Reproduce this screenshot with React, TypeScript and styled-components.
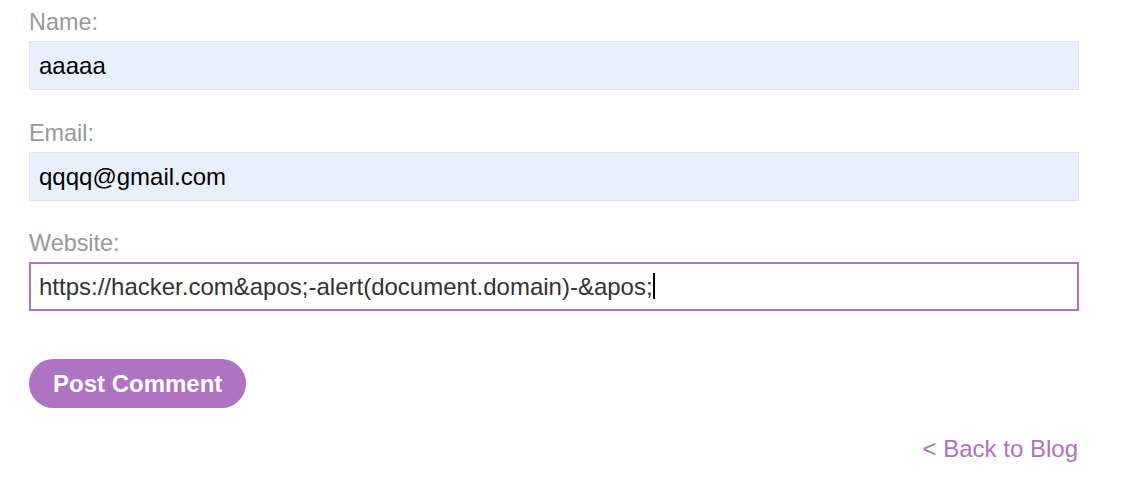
import React from 'react';
import styled, { createGlobalStyle } from 'styled-components';

const purple = '#ae73c1';

const GlobalStyle = createGlobalStyle`
  body {
    margin: 0;
    background: #ffffff;
    font-family: "Liberation Sans", Arial, sans-serif;
  }
`;

const StyledForm = styled.form`
  width: 1050px;
  margin-left: 29px;
  padding-top: 9px;
  display: flex;
  flex-direction: column;
`;

const StyledLabel = styled.label`
  display: block;
  font-size: 23.4px;
  line-height: 26px;
  color: #999999;
  margin-bottom: 6px;
`;

const StyledField = styled.div<{ gap?: number }>`
  position: relative;
  margin-bottom: ${({ gap }) => gap ?? 30}px;
`;

const StyledInput = styled.input<{ focused?: boolean }>`
  box-sizing: border-box;
  display: block;
  width: 100%;
  height: 49px;
  margin: 0;
  font-family: "Liberation Sans", Arial, sans-serif;
  font-size: 24px;
  outline: none;
  border: ${({ focused }) => (focused ? `2px solid ${purple}` : '1px solid #e3e5e8')};
  padding: 0 ${({ focused }) => (focused ? '8px' : '9px')};
  background: ${({ focused }) => (focused ? '#ffffff' : '#e8f0fe')};
  color: ${({ focused }) => (focused ? '#333333' : '#000000')};
`;

// text cursor drawn after the last character of the focused field
const StyledCaret = styled.span`
  position: absolute;
  left: 624px;
  top: 11px;
  width: 1.5px;
  height: 26px;
  background: #000000;
`;

const StyledButton = styled.button`
  align-self: flex-start;
  margin-top: 18px;
  height: 49px;
  padding: 0 24px;
  border: none;
  border-radius: 25px;
  background: ${purple};
  color: #ffffff;
  font-family: "Liberation Sans", Arial, sans-serif;
  font-size: 24px;
  font-weight: 700;
  cursor: pointer;
`;

const StyledBack = styled.a`
  align-self: flex-end;
  margin-top: 27px;
  margin-right: 1px;
  font-size: 24px;
  line-height: 27px;
  color: ${purple};
  text-decoration: none;
`;

const website = 'https://hacker.com&apos;-alert(document.domain)-&apos;';

const App = () => (
  <>
    <GlobalStyle />
    <StyledForm onSubmit={(e) => e.preventDefault()}>
      <StyledLabel>Name:</StyledLabel>
      <StyledField>
        <StyledInput readOnly value="aaaaa" />
      </StyledField>
      <StyledLabel>Email:</StyledLabel>
      <StyledField gap={29}>
        <StyledInput readOnly value="qqqq@gmail.com" />
      </StyledField>
      <StyledLabel>Website:</StyledLabel>
      <StyledField>
        <StyledInput focused readOnly value={website} />
        <StyledCaret />
      </StyledField>
      <StyledButton type="submit">Post Comment</StyledButton>
      <StyledBack href="#">&lt; Back to Blog</StyledBack>
    </StyledForm>
  </>
);

export default App;
